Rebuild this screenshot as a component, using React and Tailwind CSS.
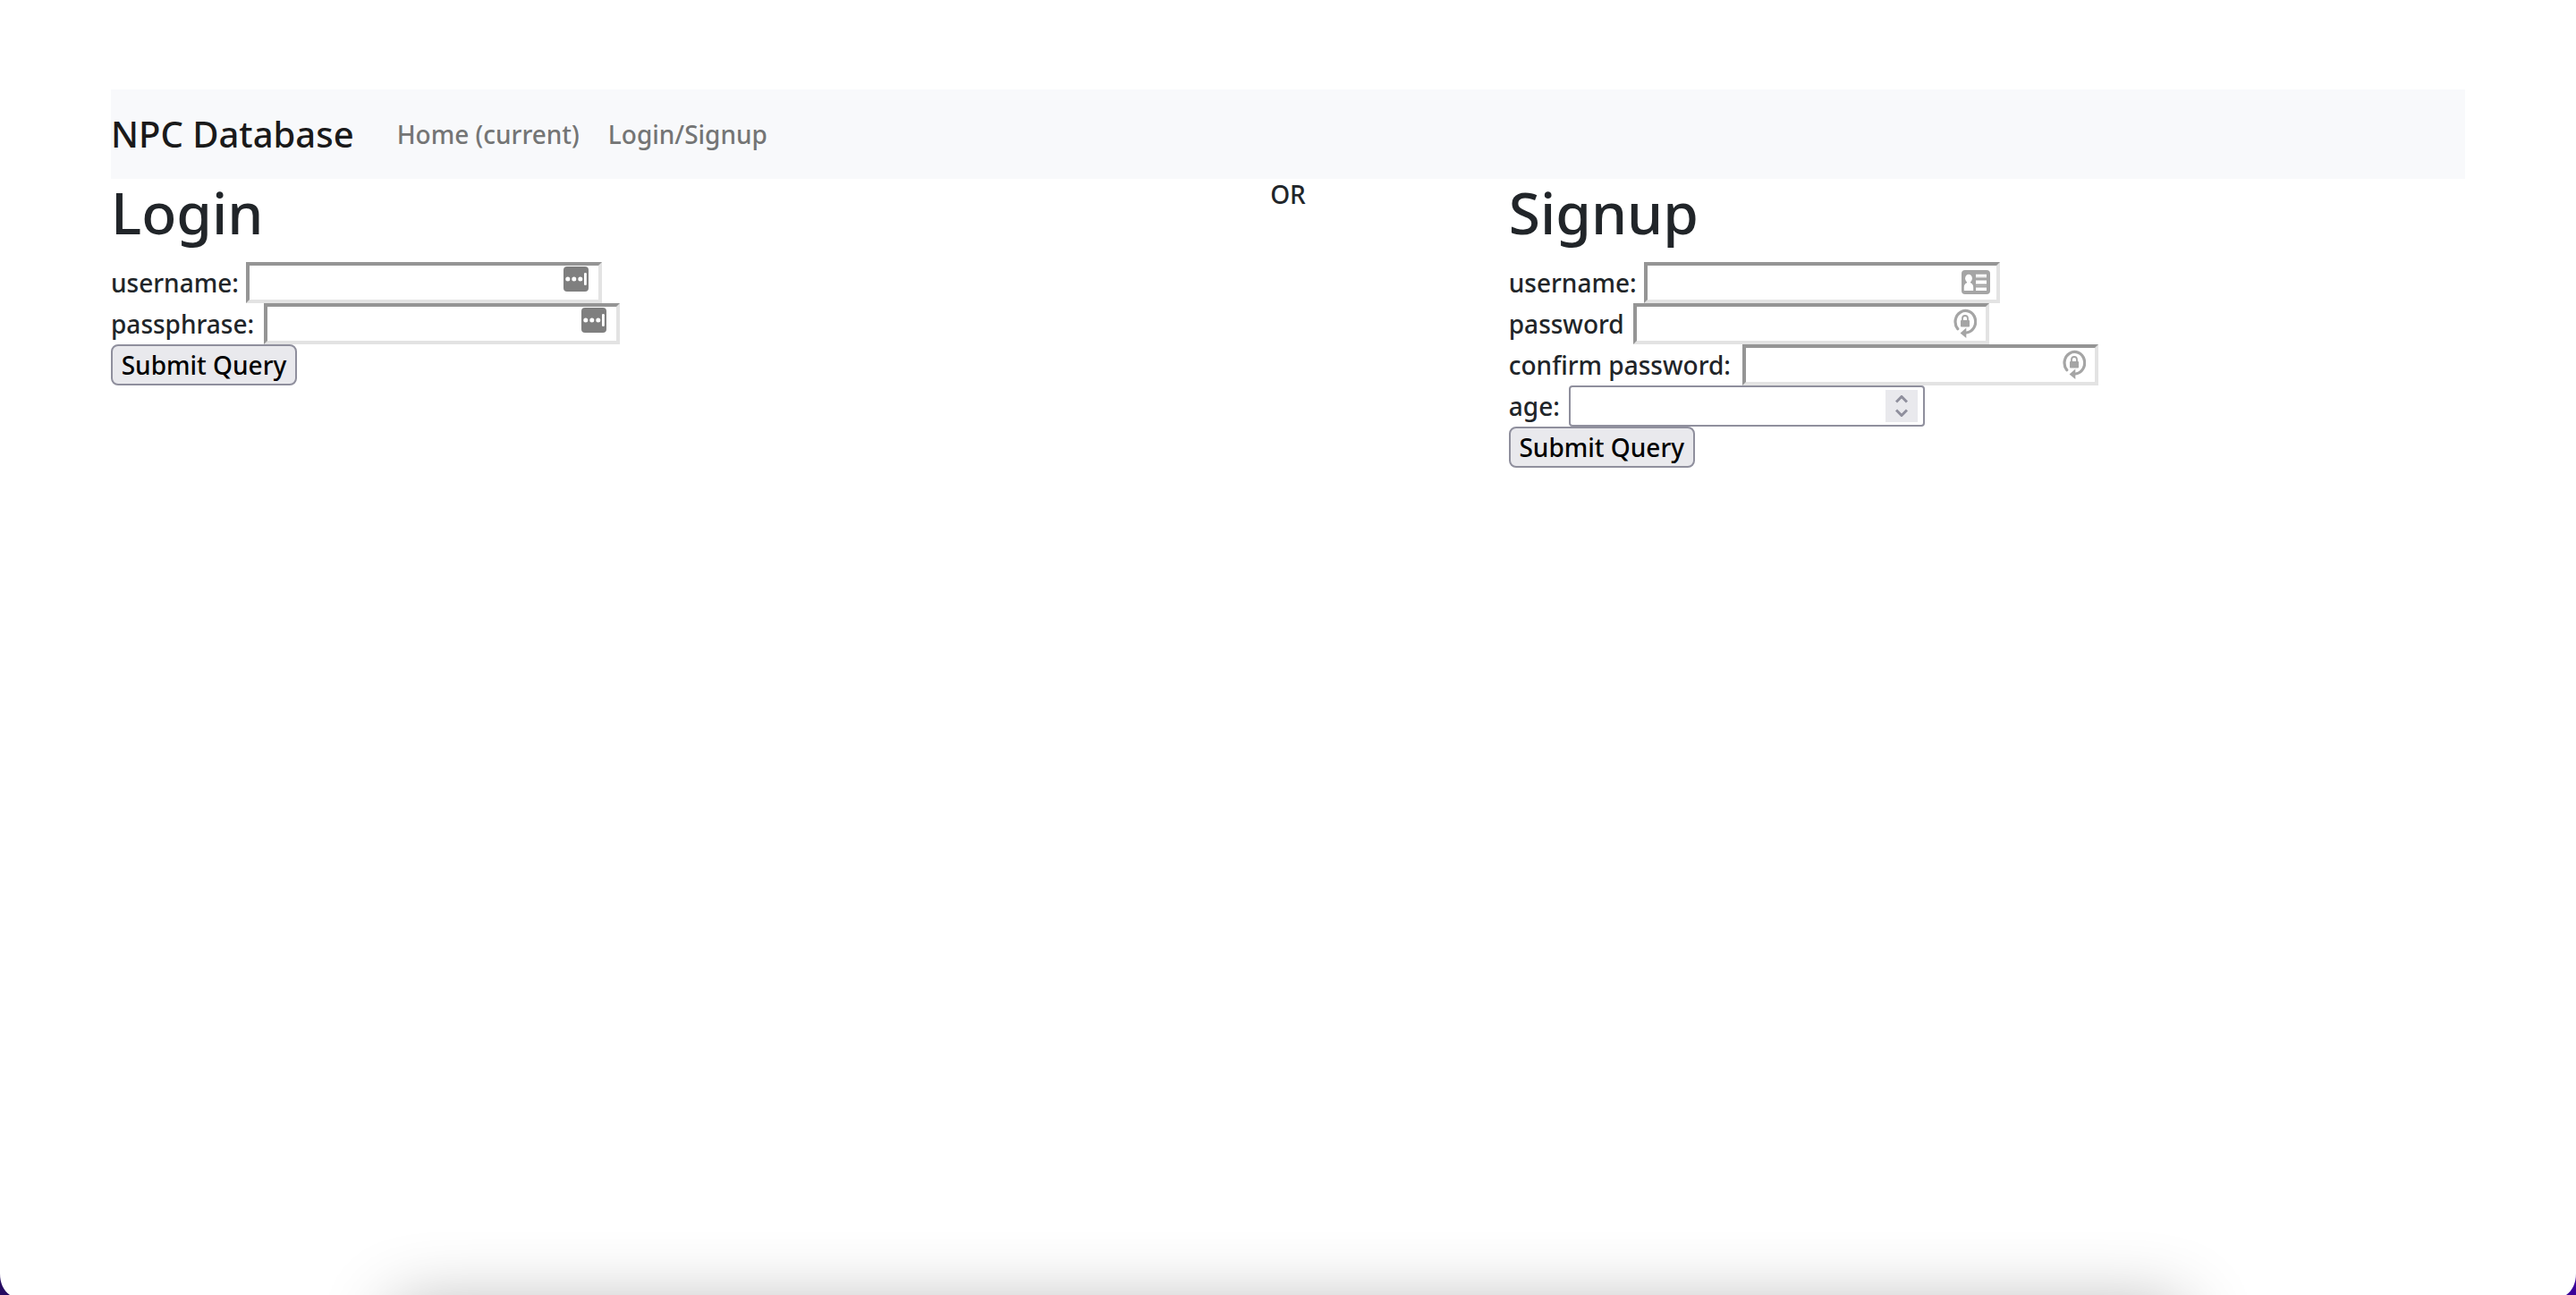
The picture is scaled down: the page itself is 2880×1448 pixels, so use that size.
import React from "react";

function AutofillIcon() {
  return (
    <svg viewBox="0 0 28 28" className="pointer-events-none absolute right-[15px] top-[5px] size-7" aria-hidden="true">
      <rect width="28" height="28" rx="4" fill="#7f7f7f" />
      <circle cx="4.8" cy="14" r="2.5" fill="#fff" />
      <circle cx="11.8" cy="14" r="2.5" fill="#fff" />
      <circle cx="18.8" cy="14" r="2.5" fill="#fff" />
      <rect x="23" y="7" width="2.8" height="14" rx="1.2" fill="#fff" />
    </svg>
  );
}

function ContactIcon() {
  return (
    <svg viewBox="0 0 32 27" className="pointer-events-none absolute right-[11px] top-[9px] h-[27px] w-8" aria-hidden="true">
      <rect width="32" height="27" rx="4" fill="#a5a5a5" />
      <ellipse cx="8" cy="9.3" rx="3.9" ry="4.6" fill="#fff" />
      <path d="M6 12h4v2.2c2.2.9 3.2 2.6 3.2 5V23H2.8v-3.8c0-2.4 1-4.1 3.2-5z" fill="#fff" />
      <path d="M16 4.8h12v3H16zM16 11.5h12v4H16zM16 19.5h12V23H16z" fill="#fff" />
      <path d="M16 8.3h12v.8H16zM16 17.6h12v.5H16z" fill="#cfcfcf" />
    </svg>
  );
}

function PasswordIcon() {
  return (
    <svg viewBox="0 0 26 34" className="pointer-events-none absolute right-[14px] top-[6px] h-[34px] w-[26px]" aria-hidden="true">
      <path d="M4.8 22.8A11.3 12.3 0 1 1 14.5 27" fill="none" stroke="#a5a5a5" strokeWidth="3.2" strokeLinecap="round" />
      <path d="M7.6 27.500 14.3 21.600V33z" fill="#a5a5a5" />
      <rect x="8" y="13" width="10" height="7.5" rx=".8" fill="#a5a5a5" />
      <path d="M10 13.500V11a3 3 0 0 1 6 0v2.500" fill="none" stroke="#a5a5a5" strokeWidth="1.8" />
    </svg>
  );
}

function Stepper() {
  return (
    <span className="pointer-events-none absolute right-2 top-[5px] flex h-9 w-9 items-center justify-center bg-[#e9e9ed]">
      <svg viewBox="0 0 14 24" className="h-6 w-[14px]" fill="none" stroke="#8f8f9d" strokeWidth="3" aria-hidden="true">
        <path d="M1 7.500 7 1.500l6 6M1 16.500l6 6 6-6" />
      </svg>
    </span>
  );
}

const INSET =
  "block h-[46px] w-[398px] border-4 border-t-[#959595] border-l-[#959595] border-r-[#e3e3e3] border-b-[#e3e3e3] bg-white pl-1 pr-12 outline-none";
const OUTLINED =
  "block h-[46px] w-[398px] appearance-none rounded border-2 border-[#8f8f9d] bg-white pl-1 pr-12 outline-none [-moz-appearance:textfield] [&::-webkit-inner-spin-button]:appearance-none";

function Field({ id, label, labelClass, type = "text", boxClass = INSET, children }) {
  return (
    <div className="flex">
      <label htmlFor={id} className={labelClass}>{label}</label>
      <div className="relative">
        <input id={id} name={id} type={type} className={boxClass} />
        {children}
      </div>
    </div>
  );
}

function SubmitButton() {
  return (
    <button type="submit" className="block h-[46px] w-[208px] whitespace-nowrap rounded-lg border-2 border-[#8f8f9d] bg-[#e9e9ed] text-center leading-[42px] text-black">
      Submit Query
    </button>
  );
}

function Title({ children }) {
  return <h1 className="mb-[18px] text-[64px] leading-[75px]">{children}</h1>;
}

export default function App() {
  return (
    <div className="relative min-h-screen overflow-hidden bg-white px-[124px] pt-[100px] font-['Noto_Sans',sans-serif] text-[28px] font-medium leading-[46px] text-[#212529]">
      <nav className="flex h-[100px] items-center bg-[#f8f9fb]">
        <a href="#" className="mr-12 whitespace-nowrap text-[40px] text-[#1a1a1a]">NPC Database</a>
        <ul className="flex gap-8 whitespace-nowrap text-[#747575]">
          <li><a href="#home">Home (current)</a></li>
          <li><a href="#login">Login/Signup</a></li>
        </ul>
      </nav>

      <main className="grid grid-cols-[13fr_6fr_13fr]">
        <form onSubmit={(e) => e.preventDefault()}>
          <Title>Login</Title>
          <Field id="login-username" label="username:" labelClass="w-[151px]"><AutofillIcon /></Field>
          <Field id="login-passphrase" label="passphrase:" labelClass="w-[171px]" type="password"><AutofillIcon /></Field>
          <SubmitButton />
        </form>

        <p className="text-center leading-[34px]">OR</p>

        <form onSubmit={(e) => e.preventDefault()}>
          <Title>Signup</Title>
          <Field id="signup-username" label="username:" labelClass="w-[151px]"><ContactIcon /></Field>
          <Field id="signup-password" label="password" labelClass="w-[139px]" type="password"><PasswordIcon /></Field>
          <Field id="signup-confirm" label="confirm password:" labelClass="w-[261px]" type="password"><PasswordIcon /></Field>
          <Field id="signup-age" label="age:" labelClass="w-[67px]" type="number" boxClass={OUTLINED}><Stepper /></Field>
          <SubmitButton />
        </form>
      </main>

      <div className="pointer-events-none absolute inset-x-[440px] top-full mt-3 h-24 shadow-[0_0_80px_rgba(0,0,0,0.3)]" />
      <svg viewBox="0 0 12 24" className="absolute bottom-0 left-0 h-6 w-3" aria-hidden="true">
        <path d="M0 0C0 11 4 19 11 24H0z" fill="#260b61" />
      </svg>
      <svg viewBox="0 0 12 24" className="absolute bottom-0 right-0 h-6 w-3" aria-hidden="true">
        <path d="M12 0C12 11 8 19 1 24h11z" fill="#3a0299" />
      </svg>
    </div>
  );
}
